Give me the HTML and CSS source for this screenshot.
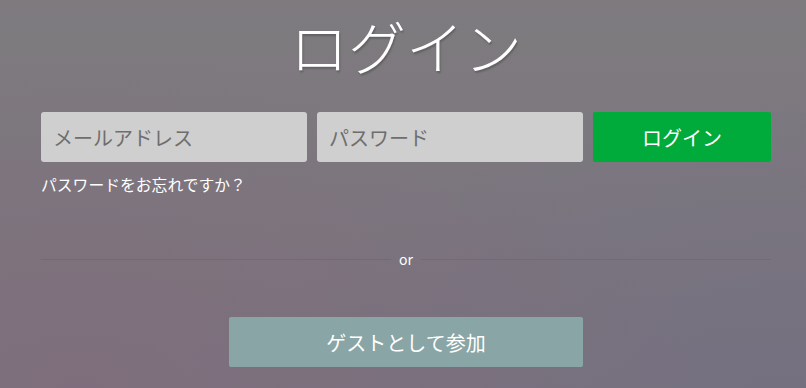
FILE: index.html
```html
<!DOCTYPE html>
<html lang="ja">
<head>
  <meta charset="UTF-8" />
  <title>ログイン</title>
  <link rel="stylesheet" href="styles.css">
</head>
<body>
  <div class="container">
    <h1>ログイン</h1>

    <div class="login-row">
      <input type="email" class="field" placeholder="メールアドレス">
      <input type="password" class="field" placeholder="パスワード">
      <button class="login-btn">ログイン</button>
    </div>
    <a href="#" class="forgot">パスワードをお忘れですか？</a>

    <div class="divider"><span>or</span></div>

    <div class="guest-row">
      <button class="guest-btn">ゲストとして参加</button>
    </div>
  </div>
</body>
</html>
```

FILE: styles.css
```css
body {
  margin: 0;
  padding: 0;
  height: 388px;
  font-family: "Noto Sans CJK JP", "Noto Sans", sans-serif;
  background-color: #7b767e;
  background-image:
    radial-gradient(ellipse at 10% 100%, rgba(128, 108, 124, 0.7), rgba(128, 108, 124, 0) 60%),
    radial-gradient(ellipse at 100% 100%, rgba(112, 110, 130, 0.6), rgba(112, 110, 130, 0) 55%),
    linear-gradient(to bottom, #7e7b7f, #7a737d);
  overflow: hidden;
}
.container {
  width: 730px;
  margin-left: 41px;
}
h1 {
  margin: 0;
  padding-top: 10px;
  height: 112px;
  box-sizing: border-box;
  text-align: center;
  color: #fff;
  font-weight: 300;
  font-size: 58px;
  line-height: 70px;
  text-shadow: 1px 2px 2px rgba(0, 0, 0, 0.22);
}
.login-row {
  display: flex;
  gap: 10px;
}
.field {
  width: 266px;
  height: 50px;
  box-sizing: border-box;
  border: none;
  border-radius: 3px;
  background-color: #cfcfcf;
  padding: 0 12px;
  font-family: inherit;
  font-size: 20px;
  color: #555;
}
.field::placeholder {
  color: #6e6e6e;
}
.login-btn {
  width: 178px;
  height: 50px;
  border: none;
  border-radius: 2px;
  background-color: #00aa3b;
  color: #fff;
  font-family: inherit;
  font-size: 20px;
}
.forgot {
  display: block;
  margin-top: 11px;
  color: #fff;
  font-size: 15.8px;
  line-height: 24px;
  text-decoration: none;
}
.divider {
  display: flex;
  align-items: center;
  margin-top: 51px;
  height: 22px;
}
.divider::before,
.divider::after {
  content: "";
  flex: 1;
  height: 1px;
  background-color: #716c74;
}
.divider span {
  padding: 0 8px;
  color: #fff;
  font-size: 14px;
  line-height: 22px;
}
.guest-row {
  display: flex;
  justify-content: center;
  margin-top: 47px;
}
.guest-btn {
  width: 354px;
  height: 50px;
  border: none;
  border-radius: 2px;
  background-color: #89a5a5;
  color: #fff;
  font-family: inherit;
  font-size: 20px;
}
```
